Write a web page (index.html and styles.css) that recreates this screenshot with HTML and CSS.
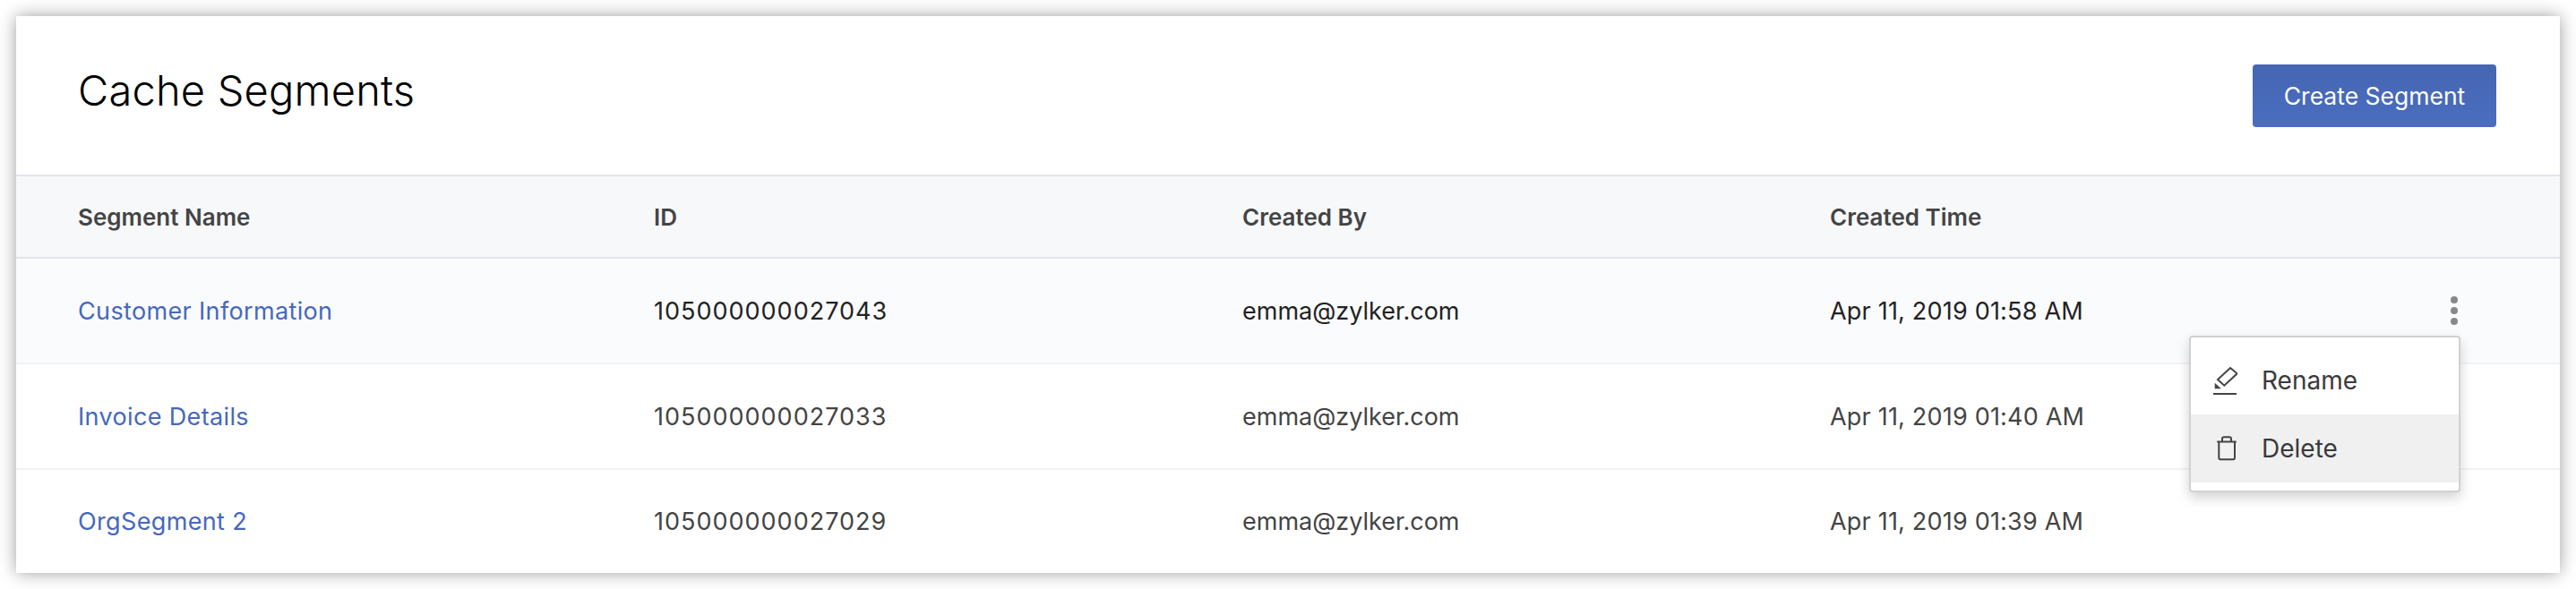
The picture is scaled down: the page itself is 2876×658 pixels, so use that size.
FILE: index.html
```html
<!DOCTYPE html>
<html lang="en">
<head>
<meta charset="utf-8">
<title>Cache Segments</title>
<link rel="stylesheet" href="styles.css">
</head>
<body>
<main class="panel">
  <header class="top">
    <h1 class="title">Cache Segments</h1>
    <button class="create">Create Segment</button>
  </header>
  <div class="row head">
    <div>Segment Name</div><div>ID</div><div>Created By</div><div>Created Time</div>
  </div>
  <div class="row body hover">
    <a class="name">Customer Information</a><div class="id">105000000027043</div><div>emma@zylker.com</div><div class="date">Apr 11, 2019 01:58 AM</div>
    <div class="dots"><i></i><i></i><i></i></div>
    <div class="menu">
      <div class="item">
        <svg class="icon" viewBox="0 0 28 32"><path class="line" d="M20 2l7.7 6.3L13.3 21.7 6 15z"/><path class="fill" d="M2.7 18.7v6.6H10z"/><path class="line" d="M1 31h26"/></svg>
        <span>Rename</span>
      </div>
      <div class="item active">
        <svg class="icon" viewBox="0 0 28 32"><path class="line" d="M5.3 8.5h21.4M7.3 8.5v17.8a2 2 0 0 0 2 2H23a2 2 0 0 0 2-2V8.5M11 8.5V5.3a2 2 0 0 1 2-2h6a2 2 0 0 1 2 2v3.2"/></svg>
        <span>Delete</span>
      </div>
    </div>
  </div>
  <div class="row body">
    <a class="name">Invoice Details</a><div class="id">105000000027033</div><div>emma@zylker.com</div><div class="date">Apr 11, 2019 01:40 AM</div>
  </div>
  <div class="row body last">
    <a class="name">OrgSegment 2</a><div class="id">105000000027029</div><div>emma@zylker.com</div><div class="date">Apr 11, 2019 01:39 AM</div>
  </div>
</main>
</body>
</html>
```
FILE: styles.css
```css
* { box-sizing: border-box; }
html, body { margin: 0; background: #fff; }
body { padding: 18px; font-family: Inter, "Liberation Sans", sans-serif; }
.panel {
  width: 2840px;
  height: 622px;
  background: #fff;
  box-shadow: 0 0 18px rgba(0, 0, 0, .38);
}
.top {
  height: 179px;
  border-bottom: 2px solid #e3e5ea;
  display: flex;
  justify-content: space-between;
  align-items: center;
  padding: 0 71px 0 69px;
}
.title {
  margin: 0 0 12px;
  font-size: 47px;
  font-weight: 300;
  letter-spacing: .2px;
  color: #000;
}
.create {
  width: 272px;
  height: 70px;
  border: 0;
  border-radius: 4px;
  background: linear-gradient(#4566b2, #4a6dbf);
  color: #fff;
  font: 400 26.5px Inter, "Liberation Sans", sans-serif;
}
.row {
  display: grid;
  grid-template-columns: 643px 657px 656px 1fr;
  align-items: center;
  padding-left: 69px;
  position: relative;
}
.head {
  height: 92px;
  background: #f7f8fa;
  border-bottom: 2px solid #e3e5ea;
  font-size: 26px;
  font-weight: 600;
  color: #444;
}
.body {
  height: 118px;
  border-bottom: 2px solid #f1f2f4;
  font-size: 27px;
  color: #444;
}
.hover { background: #fafbfd; color: #222; }
.last { border-bottom: 0; height: 115px; }
.name { color: #4668bb; letter-spacing: .35px; }
.id { letter-spacing: 1px; }
.date { letter-spacing: .2px; }
.dots {
  position: absolute;
  top: 42px;
  right: 114px;
  display: flex;
  flex-direction: column;
  gap: 4px;
}
.dots i {
  width: 8px;
  height: 8px;
  border-radius: 50%;
  background: #888;
}
.menu {
  position: absolute;
  top: 86px;
  left: 2426px;
  width: 303px;
  height: 175px;
  padding: 10px 0 9px;
  background: #fff;
  border: 2px solid #d2d2d4;
  border-radius: 4px;
  box-shadow: 0 6px 14px rgba(0, 0, 0, .18);
  z-index: 2;
}
.item {
  height: 76px;
  display: flex;
  align-items: center;
  gap: 27px;
  padding-left: 24px;
  font-size: 28px;
  color: #3a3a3a;
}
.active { background: #f0f0f1; }
.icon { width: 28px; height: 32px; flex: none; }
.line { fill: none; stroke: #444; stroke-width: 2; }
.fill { fill: #444; }
```
